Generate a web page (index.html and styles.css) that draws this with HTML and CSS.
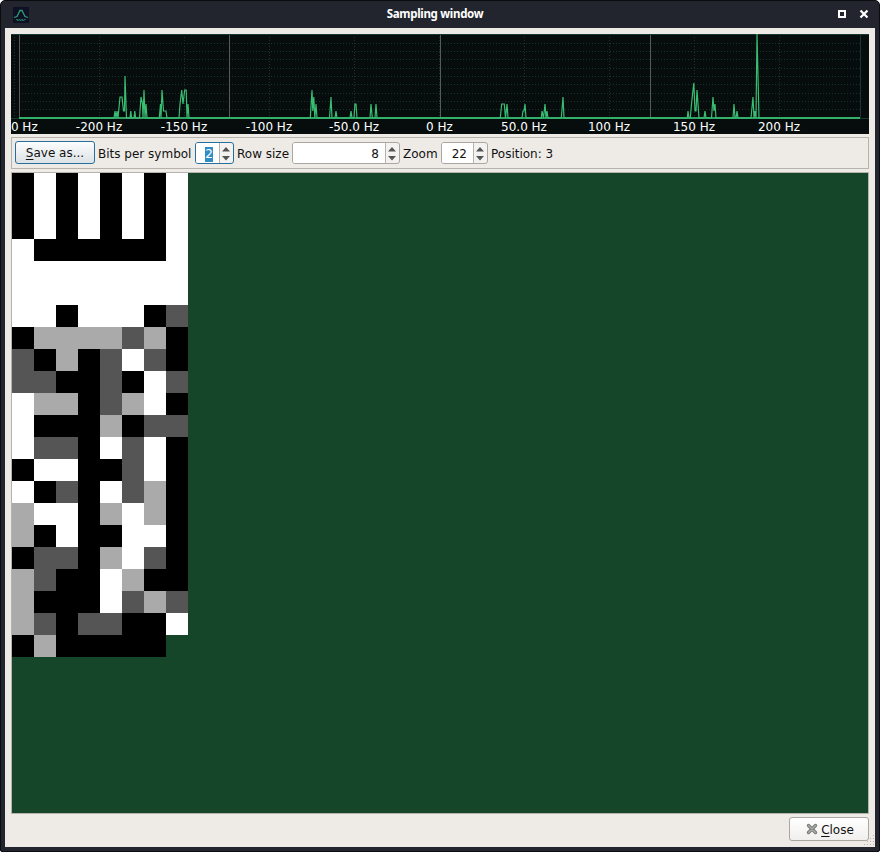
FILE: index.html
```html
<!DOCTYPE html>
<html lang="en">
<head>
<meta charset="utf-8">
<title>Sampling window</title>
<link rel="stylesheet" href="styles.css">
</head>
<body>
<div class="window">
  <header class="titlebar">
    <svg class="appicon" width="16" height="16" viewBox="0 0 16 16"><rect width="16" height="16" fill="#0f1026"/><path d="M1 10.5 4 9.5 5.5 6.5 7 3.5H9L10.5 6.5 12 9.5 15 10.5" fill="none" stroke="#2e9f70" stroke-width="1.3"/><path d="M3 12.500H13M4 13.500H12" stroke="#1e7055" stroke-dasharray="2 .6"/></svg>
    <h1>Sampling window</h1>
    <svg class="controls" width="32" height="12" viewBox="0 0 32 12"><path d="M3 3H9V9H3Z" fill="none" stroke="#fff" stroke-width="2"/><path d="m24.500 2.500 7 7m0-7-7 7" stroke="#fff" stroke-width="2.200"/></svg>
  </header>
  <main class="content">
    <svg class="spectrum" width="858" height="100" viewBox="11 34 858 100">
      <rect x="11" y="34" width="858" height="100" fill="#070d0d"/>
      <path class="dots" d="M22 43.5H860M22 51.5H860M22 59.5H860M22 68.5H860M22 76.5H860M22 84.5H860M22 93.5H860M22 101.5H860M22 109.5H860"/>
      <path class="dots" d="M14.5 37V118M99.5 37V118M184.5 37V118M269.5 37V118M354.5 37V118M439.5 37V118M524.5 37V118M609.5 37V118M694.5 37V118M779.5 37V118"/>
      <path class="axis" d="M11 34.5H869M11 118.5H869M860.5 34V118"/>
      <path class="marker" d="M19.5 35V118M229.5 35V118M440.5 35V118M650.5 35V118"/>
      <path class="base" d="M19 118H860"/>
      <path class="trace" d="M19 118H114L115 111 116 118 117 111 118 118 120 97H122L123.500 111 124.500 111 125 76 126.500 118H130L130.800 111 131.600 118H134L134.800 111 135.600 118H139.500L141 97 142.500 104 143 118 144 90 145 118 146 104 147 118H159.300L160.500 104 161 118 162 90 163.500 111H166L167 118H179L180 104 181.700 90 183 104 184.700 90H186.200L187 118 188 104 189 118H310.300L312 90 312.800 111 313.800 97 314.800 118 316 104 317 118H329.500L331 97 332 118H335L336 111 337 118H350L351 111 352 118H354L354.900 104H356L357 118H370L371 104 372.300 118H375L376 104 377 118H500.300L501.700 104H504.300L505.500 118 507 104 508 118H522L523 111 524 111 525 104 526 118H541.300L542 111 543.500 118 545 104 546 118 547 111 548 118H561.300L563 97 564 118H687.300L688 111 689 118H690.300L691.500 104 693.800 83 695 111 696 111 697 90 699 118H704L705 111 706 118H711.500L713 97 714 111 715 104 716 118H733L734 104 735 118H736L737 111 738 118H751L753 97 754 118 755 111 756 118 757 34 759 118H860"/>
      <g class="ticks">
        <text x="24.300" y="131">0 Hz</text><text x="99" y="131">-200 Hz</text><text x="184" y="131">-150 Hz</text><text x="269" y="131">-100 Hz</text><text x="354" y="131">-50.0 Hz</text><text x="439.500" y="131">0 Hz</text><text x="524" y="131">50.0 Hz</text><text x="609" y="131">100 Hz</text><text x="694" y="131">150 Hz</text><text x="779" y="131">200 Hz</text>
      </g>
    </svg>
    <div class="toolbar">
      <button class="btn save"><span><u>S</u>ave as...</span></button>
      <label class="lbl bits">Bits per symbol</label>
      <div class="spin focus s1"><span class="val"><mark>2</mark></span><svg class="arrows" width="13" height="20" viewBox="0 0 13 20"><path d="M2 8.500H10L6 4ZM2 13H10L6 17.500Z"/></svg></div>
      <label class="lbl row">Row size</label>
      <div class="spin s2"><span class="val">8</span><svg class="arrows" width="13" height="20" viewBox="0 0 13 20"><path d="M2 8.500H10L6 4ZM2 13H10L6 17.500Z"/></svg></div>
      <label class="lbl zoom">Zoom</label>
      <div class="spin s3"><span class="val">22</span><svg class="arrows" width="13" height="20" viewBox="0 0 13 20"><path d="M2 8.500H10L6 4ZM2 13H10L6 17.500Z"/></svg></div>
      <span class="lbl">Position: 3</span>
    </div>
    <div class="view"><div class="cells" id="cells"></div></div>
    <footer class="actions">
      <button class="btn close"><svg width="12" height="12" viewBox="0 0 12 12"><path d="m2.500 2.500 7 7m0-7-7 7" stroke="#777975" stroke-width="3.400" stroke-linecap="round"/><path d="m2.500 2.500 7 7m0-7-7 7" stroke="#a9aaa7" stroke-width="1.500" stroke-linecap="round"/></svg><span><u>C</u>lose</span></button>
    </footer>
    <svg class="grip" width="12" height="12" viewBox="0 0 12 12"><path d="M10 1h1v1h-1zM7 4h1v1h-1zM10 4h1v1h-1zM4 7h1v1h-1zM7 7h1v1h-1zM10 7h1v1h-1zM1 10h1v1h-1zM4 10h1v1h-1zM7 10h1v1h-1zM10 10h1v1h-1z" fill="#b5b2ad"/></svg>
  </main>
</div>
<script src="script.js"></script>
</body>
</html>
```
FILE: styles.css
```css
* { box-sizing: border-box; }
body { margin: 0; background: #fff; font: 12px "DejaVu Sans", sans-serif; color: #111; }
.window { width: 880px; height: 852px; padding: 0 4px 4px; background: #22252e; border: 1px solid #0b0c10; border-radius: 5px 5px 2px 2px; overflow: hidden; }
.titlebar { height: 27px; display: flex; align-items: center; padding: 0 2px 0 8px; }
.appicon { flex: none; margin-top: 1px; }
h1 { flex: 1; margin: 0 0 2px; padding-left: 5px; text-align: center; font: bold 11.5px/24px "Noto Sans", sans-serif; letter-spacing: -.3px; color: #fff; }
.controls { flex: none; margin: 0 5px 1px 0; }
.content { position: relative; height: 819px; padding: 6px 6px 0; background: #eeebe7; }
.spectrum { display: block; }
.dots { fill: none; stroke: #17342f; stroke-dasharray: 1 2; shape-rendering: crispEdges; }
.axis { fill: none; stroke: #163832; shape-rendering: crispEdges; }
.marker { stroke: #585b5b; shape-rendering: crispEdges; }
.base { stroke: #2fa263; stroke-width: 2; }
.trace { fill: none; stroke: #39bd73; stroke-width: 1.2; }
.ticks { fill: #fff; font-size: 12px; text-anchor: middle; }
.toolbar { height: 32px; margin-top: 3px; padding: 0 3px; display: flex; align-items: center; border: 1px solid #b6b2ae; }
.btn { display: flex; align-items: center; justify-content: center; padding: 0; border: 1px solid #aaa7a3; border-radius: 3px; background: linear-gradient(#fff, #f1efed); font: 12px "DejaVu Sans", sans-serif; color: #111; }
.btn u { text-decoration-thickness: 1px; text-underline-offset: 2px; }
.save { width: 80px; height: 23px; margin: 0 3px 1px 0; border-color: #276f9e; background: linear-gradient(#fcfdfd, #dce2e5); }
.lbl { white-space: nowrap; padding-top: 2px; }
.bits { width: 97px; }
.row { width: 55px; }
.zoom { width: 38px; }
.spin { height: 22px; display: flex; border: 1px solid #aaa7a3; border-radius: 3px; background: #f4f2f0; overflow: hidden; }
.spin.focus { border-color: #276f9e; }
.val { flex: 1; padding-right: 6px; line-height: 22px; text-align: right; background: #fff; border-right: 1px solid #b6b2ae; }
.val mark { display: inline-block; height: 15px; line-height: 15px; background: #308cc6; color: #fff; }
.arrows { flex: none; fill: #555; }
.s1 { width: 39px; margin-right: 3px; }
.s2 { width: 108px; margin-right: 3px; }
.s3 { width: 47px; margin-right: 3px; }
.view { height: 642px; margin-top: 3px; border: 1px solid #b6b2ae; background: #154629; }
.cells { width: 176px; display: grid; grid-template-columns: repeat(8, 22px); grid-auto-rows: 22px; }
.c0 { background: #000; }
.c1 { background: #555; }
.c2 { background: #aaa; }
.c3 { background: #fff; }
.actions { display: flex; justify-content: flex-end; margin-top: 3px; }
.close { width: 80px; height: 24px; padding-left: 2px; gap: 3px; }
.close span { padding-top: 2px; }
.grip { position: absolute; right: 0; bottom: 1px; }
```
FILE: script.js
```js
// Two-bit symbols, eight to a row; the last row is incomplete.
const symbols = [
  '03030303', '03030303', '03030303', '30000003', '33333333', '33333333',
  '33033301', '02222120', '10201310', '11001031', '32201230', '30002011',
  '31103130', '03300130', '30103120', '23302320', '20300330', '01102310',
  '21003200', '20003121', '21011003', '0200000'
].join('');
const cells = document.getElementById('cells');
for (const s of symbols) {
  const cell = document.createElement('i');
  cell.className = 'c' + s;
  cells.append(cell);
}
```
